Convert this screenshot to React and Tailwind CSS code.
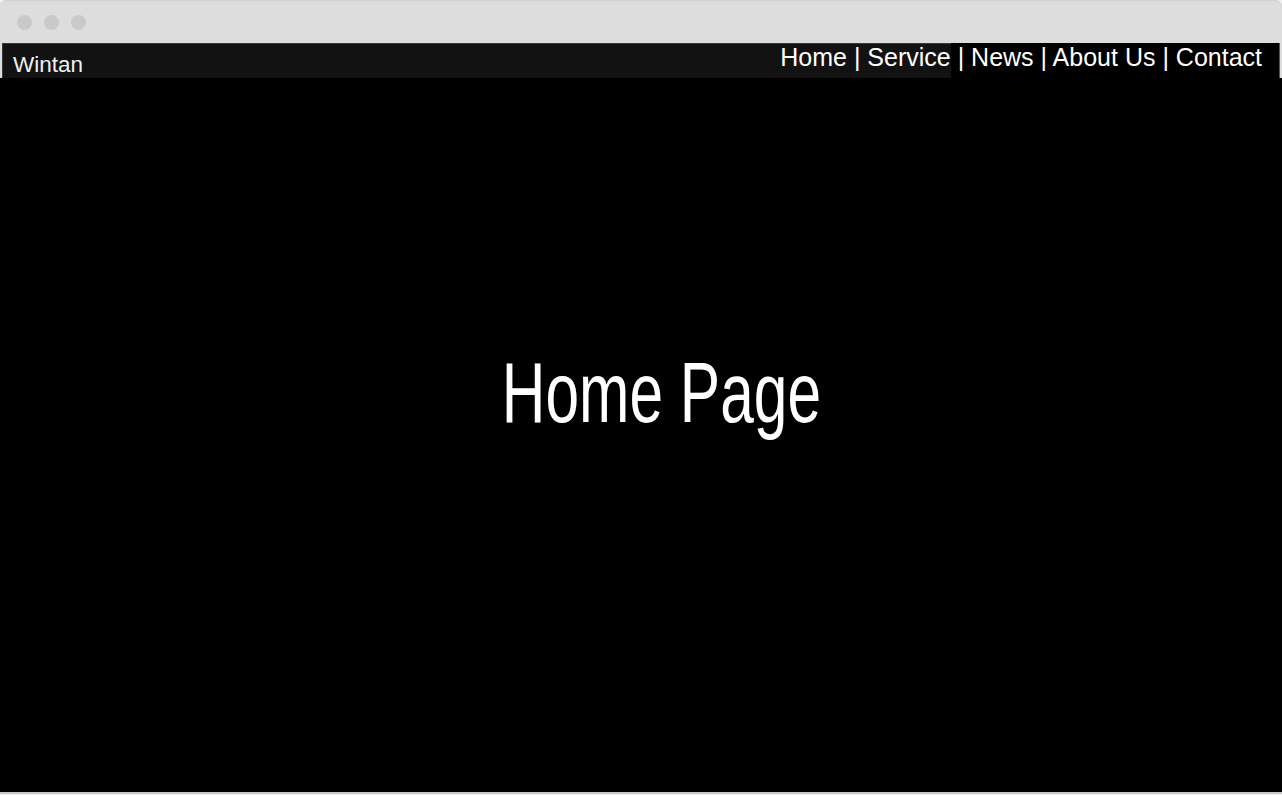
export default function App() {
  return (
    <div className="w-[1282px] h-[795px] bg-[#f2f2f2] font-['Liberation_Sans',Arial,sans-serif] overflow-hidden">
      <div className="h-[794px] bg-[#dddddd] rounded-t-[6px] border-t border-[#d2d2d2] border-b-2 border-b-[#c8c8c8] flex flex-col">
        <div className="h-[42px] flex items-center gap-[12px] pl-[17px] pt-[1px] shrink-0">
          <span className="w-[15px] h-[15px] rounded-full bg-[#c9c9c9]" />
          <span className="w-[15px] h-[15px] rounded-full bg-[#c9c9c9]" />
          <span className="w-[15px] h-[15px] rounded-full bg-[#c9c9c9]" />
        </div>
        <div className="h-[35px] mx-[2px] bg-[#121212] border-t border-l border-[#3a3a3a] flex justify-between shrink-0">
          <div className="pl-[10px] pt-[8px] text-[22.5px] leading-[normal] text-[#f0f0f0]">Wintan</div>
          <div className="-mt-[1px] flex items-start text-[25px] leading-[normal] text-white whitespace-pre">
            <span>Home | Service</span>
            <span className="h-[36px] bg-black pr-[17px] border-r border-[#555]"> | News | About Us | Contact</span>
          </div>
        </div>
        <div className="flex-1 bg-black flex justify-center pl-[40px]">
          <div className="mt-[272px] text-[85px] leading-none text-white scale-x-[0.711] whitespace-nowrap h-[85px]">Home Page</div>
        </div>
      </div>
    </div>
  );
}
